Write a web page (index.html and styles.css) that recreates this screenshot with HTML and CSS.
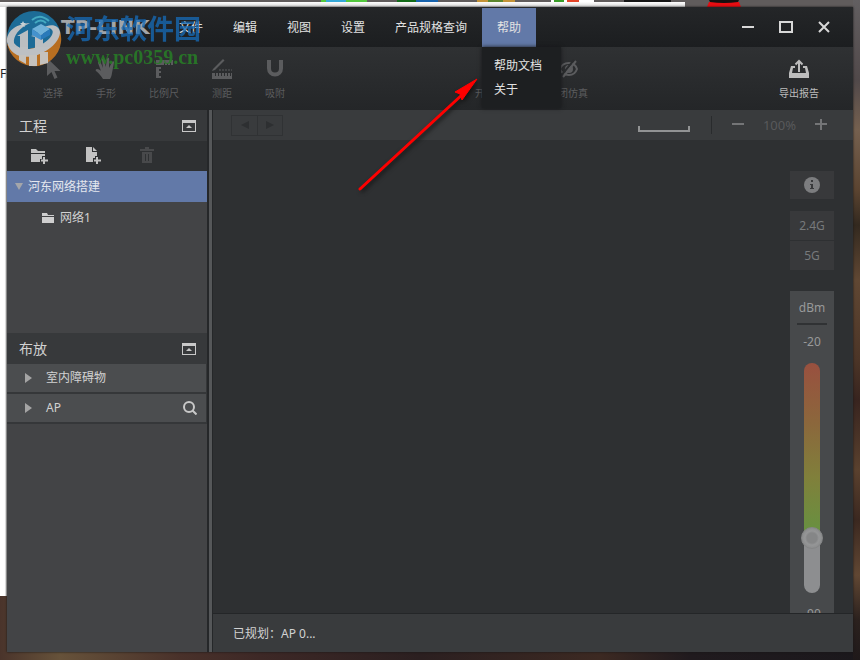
FILE: index.html
```html
<!DOCTYPE html>
<html lang="zh-CN">
<head>
<meta charset="utf-8">
<title>TP-LINK</title>
<link rel="stylesheet" href="styles.css">
</head>
<body>
<svg class="desk-strip" width="860" height="7" viewBox="0 0 860 7" aria-hidden="true">
  <path fill="#53c83e" d="M321 0h46v2h-46z"/><path fill="#36a9d8" d="M326 0h20v2h-20z"/>
  <path fill="#126b18" d="M397 0h20v2h-20z"/><path fill="#1763ad" d="M416 0h22v2h-22z"/>
  <path fill="#c49337" d="M477 0h38v2h-38z"/><path fill="#5b862e" d="M488 0h15v2h-15z"/>
  <path fill="#fff" d="M551 0h43v2h-43z"/><path fill="#399d28" d="M554 0h10v2h-10z"/><path fill="#e44427" d="M567 0h12v2h-12z"/>
  <path fill="#161616" d="M624 0h47v2h-47z"/>
  <path fill="#e80d12" d="M709 2h30l2 5h-34z"/><path fill="#161010" d="M709 0h30l-1 2q-14 2-28 0z"/>
</svg>
<span class="desk-text">Fi</span>
<div class="window">
  <header class="titlebar">
    <span class="brand">TP-LINK</span>
    <nav class="menu">
      <button>文件</button><button>编辑</button><button>视图</button><button>设置</button><button>产品规格查询</button>
      <div class="menu-open">
        <button class="active">帮助</button>
        <div class="dropdown"><button>帮助文档</button><button>关于</button></div>
      </div>
    </nav>
    <div class="controls">
      <button aria-label="最小化"><svg width="16" height="16" viewBox="0 0 16 16"><path d="M2 8h12" stroke="#d8d8d8" stroke-width="2"/></svg></button>
      <button aria-label="最大化"><svg width="16" height="16" viewBox="0 0 16 16"><path d="M2 3h12v10H2z" fill="none" stroke="#d8d8d8" stroke-width="2"/></svg></button>
      <button aria-label="关闭"><svg width="16" height="16" viewBox="0 0 16 16"><path d="M3 3l10 10M13 3L3 13" stroke="#d8d8d8" stroke-width="2"/></svg></button>
    </div>
  </header>

  <div class="toolbar">
    <div class="tools">
      <button><svg width="24" height="24" viewBox="0 0 24 24"><path d="M6 1v18l4.500-4 3 7 3-1.400-3-6.600h6z" fill="currentColor"/></svg>选择</button>
      <button><svg width="24" height="24" viewBox="0 0 24 24"><path d="M9 22c-2-3-4-6-7-8-1-1 0-2 1-2 2 0 3 1 4 2L4 6c0-2 2-2 2.500-1L9 11 8 3c0-2 2-2 2.500 0l1.200 7L13 2c.3-2 2.300-1.600 2.200 0L15 11l3-6c.8-1.600 2.400-.8 2 .8L18 16c-.4 3-1 4-2 6z" fill="currentColor"/></svg>手形</button>
      <button><svg width="24" height="24" viewBox="0 0 24 24"><path d="M4 3h17v5h-2V6h-1v2h-2V6h-1v2h-2V6h-1v2H4z" fill="currentColor"/><path d="M5 10h4v2H7v2h2v2H7v3h2v2H4V10z" fill="currentColor"/></svg>比例尺</button>
      <button><svg width="24" height="24" viewBox="0 0 24 24"><path d="M3 12L13 2l1.500 1.500L5 13l-3 1z" fill="currentColor"/><path d="M2 16v6h20v-6h-1v3h-1v-3h-2v3h-1v-3h-2v3h-1v-3h-2v3h-1v-3H9v3H8v-3H6v3H5v-3z" fill="currentColor"/><path d="M9 13h13" stroke="currentColor" stroke-dasharray="2 1"/></svg>测距</button>
      <button><svg width="24" height="24" viewBox="0 0 24 24"><path d="M6 3v8.500a6 6 0 0 0 12 0V3" fill="none" stroke="currentColor" stroke-width="4"/></svg>吸附</button>
    </div>
    <div class="sim-tools">
      <button><svg width="24" height="24" viewBox="0 0 24 24"><path d="M3 12q9-11 18 0-9 11-18 0z" fill="none" stroke="currentColor" stroke-width="2"/></svg>开启仿真</button>
      <button><svg width="24" height="24" viewBox="0 0 24 24"><path d="M4 12Q6 6 13 6q6 0 8 6-2 6-8 6-7 0-9-6z" fill="none" stroke="currentColor" stroke-width="2"/><circle cx="13" cy="12" r="4" fill="currentColor"/><path d="M18 3L5 19" stroke="#2a2c2e" stroke-width="2"/><path d="M20 4L7 20" stroke="currentColor" stroke-width="2"/></svg>关闭仿真</button>
    </div>
    <button class="export"><svg width="24" height="24" viewBox="0 0 24 24"><path d="M8 9H4L2 16v5h20v-5l-2-7h-4v2h2l1 5H5l1-5h2z" fill="currentColor"/><path d="M12 15V5M8.500 7.500L12 4l3.500 3.500" stroke="currentColor" stroke-width="2" fill="none"/></svg>导出报告</button>
  </div>

  <div class="main">
    <aside class="sidebar">
      <section>
        <div class="panel-head"><h2>工程</h2><button aria-label="折叠工程"><svg width="14" height="12" viewBox="0 0 14 12"><path fill="#c8c8c8" fill-rule="evenodd" d="M0 0h14v12H0zM1 3v8h12V3z"/><path fill="#c8c8c8" d="M4 8l3-3 3 3z"/></svg></button></div>
        <div class="file-tools">
          <button aria-label="新建工程"><svg width="18" height="18" viewBox="0 0 18 18"><path fill="#c2c2c2" d="M1 2h5l2 2h7v2H1zM1 7h14v2h-3v3h-2v3H1z"/><path d="M14 10v7M11 13.500h7" stroke="#c2c2c2" stroke-width="2"/></svg></button>
          <button aria-label="新建网络"><svg width="18" height="18" viewBox="0 0 18 18"><path fill="#c2c2c2" d="M2 0h6v5h5v4h-2v2H9v4H2zM9 0l4 4H9z"/><path d="M13 10v7M10 13.500h7" stroke="#c2c2c2" stroke-width="2"/></svg></button>
          <button aria-label="删除"><svg width="18" height="18" viewBox="0 0 18 18"><path fill="#48494b" fill-rule="evenodd" d="M2 2h5V0h4v2h5v2H2zM4 5h10v11H4zM7 7v7h1V7zM10 7v7h1V7z"/></svg></button>
        </div>
        <button class="tree-row selected"><svg width="8" height="7" viewBox="0 0 8 7"><path d="M0 0h8L4 7z" fill="#a4a6aa"/></svg>河东网络搭建</button>
        <button class="tree-row child"><svg width="12" height="12" viewBox="0 0 12 12"><path fill="#cfcfcf" d="M0 1h5l1 2h6v1H0zM0 5h12v6H0z"/></svg>网络1</button>
      </section>
      <section>
        <div class="panel-head layout-head"><h2>布放</h2><button aria-label="折叠布放"><svg width="14" height="12" viewBox="0 0 14 12"><path fill="#c8c8c8" fill-rule="evenodd" d="M0 0h14v12H0zM1 3v8h12V3z"/><path fill="#c8c8c8" d="M4 8l3-3 3 3z"/></svg></button></div>
        <div class="group"><button><svg width="7" height="10" viewBox="0 0 7 10"><path d="M0 0l7 5-7 5z" fill="#a4a4a4"/></svg>室内障碍物</button></div>
        <div class="group"><button><svg width="7" height="10" viewBox="0 0 7 10"><path d="M0 0l7 5-7 5z" fill="#a4a4a4"/></svg>AP</button><button class="search" aria-label="搜索"><svg width="14" height="14" viewBox="0 0 14 14"><circle cx="6" cy="6" r="5" fill="none" stroke="#c8c8c8" stroke-width="2"/><path d="M9.500 9.500l4 4" stroke="#c8c8c8" stroke-width="2"/></svg></button></div>
      </section>
    </aside>
    <div class="splitter"></div>
    <main class="canvas">
      <div class="canvas-bar">
        <div class="history">
          <button aria-label="后退"><svg width="8" height="8" viewBox="0 0 8 8"><path d="M8 0v8L0 4z" fill="#2d2f31"/></svg></button>
          <button aria-label="前进"><svg width="8" height="8" viewBox="0 0 8 8"><path d="M0 0v8l8-4z" fill="#2d2f31"/></svg></button>
        </div>
        <svg class="ruler" width="52" height="6" viewBox="0 0 52 6" aria-hidden="true"><path d="M1 0v5h50V0" fill="none" stroke="#929394" stroke-width="2"/></svg>
        <div class="zoom">
          <button aria-label="缩小"><svg width="12" height="12" viewBox="0 0 12 12"><path d="M0 5h12" stroke="#747577" stroke-width="2"/></svg></button>
          <span>100%</span>
          <button aria-label="放大"><svg width="12" height="12" viewBox="0 0 12 12"><path d="M0 5h12M6 0v11" stroke="#747577" stroke-width="2"/></svg></button>
        </div>
      </div>
      <div class="workspace">
        <div class="side-controls">
          <button class="info" aria-label="信息"><svg width="16" height="16" viewBox="0 0 16 16"><circle cx="8" cy="8" r="8" fill="#7c7d7f"/><path d="M7 3h2v2H7zM6 7h3v4h1v1H6v-1h1V8H6z" fill="#38393b"/></svg></button>
          <div class="bands"><button>2.4G</button><button>5G</button></div>
          <div class="signal">
            <label for="dbm">dBm</label>
            <span>-20</span>
            <input id="dbm" type="range" min="0" max="100" value="79">
            <span>-90</span>
          </div>
        </div>
      </div>
      <footer class="status">已规划：AP 0...</footer>
    </main>
  </div>
</div>

<div class="watermark">
  <svg width="56" height="58" viewBox="0 0 56 58" aria-hidden="true">
    <circle cx="28" cy="29" r="27" fill="#1d74a4"/>
    <path d="M1 35Q26 50 54 22A27 27 0 0 1 2 38z" fill="#c87620"/>
    <path d="M1 33C0 24 8 15 24 14 13 19 7 27 8 34 12 40 22 42 31 38 44 32 50 23 45 20 42 18 38 19 35 20 43 14 53 15 54 23 54 32 43 43 28 47 14 50 4 45 1 33z" fill="#cdd0d3"/>
    <path d="M11 27l11-6v20h-8V27zM25 27l12-4v16l-8 4V28z" fill="#cdd0d3"/>
    <path d="M13 46h7v9l-7-4zM23 46h8v11h-8zM34 43h8v11l-8 2z" fill="#d6d2cd"/>
    <path d="M26 20l9-5 9 5-9 6z" fill="#79c2ee"/><path d="M26 20v6l9 5v-5z" fill="#4a9fe0"/><path d="M44 20v6l-9 5v-5z" fill="#2c84cb"/>
    <path d="M26 11q8-7 17 1M29 14q6-5 11 0" fill="none" stroke="#48b8d2" stroke-width="2"/>
    <path d="M17 12l1 2h2l-2 2 1 2-2-1-2 1 1-2-2-2h2z" fill="#d8e4e9"/>
  </svg>
  <div class="watermark-text"><strong>河东软件园</strong><span>www.pc0359.cn</span></div>
</div>
<svg class="pointer" width="130" height="124" viewBox="0 0 130 124" aria-hidden="true">
  <path d="M5 114L109 18" stroke="#f00" stroke-width="3" stroke-linecap="round"/><path d="M122 4l-15 21-2-6-5-2z" fill="#f00" stroke="#f00"/>
</svg>
</body>
</html>
```
FILE: styles.css
```css
* { box-sizing: border-box; }
body {
  margin: 0;
  height: 100vh;
  padding: 7px 7px 8px;
  overflow: hidden;
  position: relative;
  font: 12px/16px "Noto Sans", "Noto Sans CJK SC", sans-serif;
  color: #d2d2d2;
  background:
    linear-gradient(#fff, #d5d5d5) 0 2px / 685px 5px no-repeat,
    linear-gradient(90deg, #fff 5px, #a9a9a9) 0 2px / 7px 594px no-repeat,
    linear-gradient(#625f61, #51494a 80px, #75604f 130px, #5b4431 190px, #33291f 225px, #604733 280px, #4c3527 360px, #38241f 400px, #5a412e 470px, #3b2820 520px, #614733 575px, #2b211e 620px, #1f191a) right 0 / 7px 100% no-repeat,
    linear-gradient(90deg, #4a342b, #66523a 60px, #49312a 180px, #3d2826 260px, #2b1f20 420px, #3c2922 600px, #201a1e 690px, #1b181c) 0 100% / 100% 64px no-repeat,
    #605c5c;
}
button {
  border: 0;
  padding: 0;
  background: none;
  color: inherit;
  font: inherit;
}
svg { display: block; flex: none; }
.desk-strip { position: absolute; top: 0; left: 0; }
.desk-text { position: absolute; left: 0; top: 66px; width: 7px; overflow: hidden; color: #222; }

.window {
  height: 100%;
  display: flex;
  flex-direction: column;
  position: relative;
  background: #2e3032;
  box-shadow: 0 0 2px #161616;
}
.titlebar {
  flex: none;
  height: 40px;
  display: flex;
  align-items: stretch;
  background: linear-gradient(#242628, #1c1e20);
}
.brand {
  width: 157px;
  padding-left: 54px;
  font: bold 20px/40px "DejaVu Sans", sans-serif;
  color: #a2a5a9;
}
.menu { display: flex; padding-top: 1px; color: #e2e2e2; }
.menu button { padding: 0 15px; white-space: nowrap; }
.menu-open { position: relative; display: flex; }
.menu .active { background: #6279a8; }
.dropdown {
  position: absolute;
  top: 100%;
  left: 0;
  z-index: 2;
  width: 79px;
  padding: 7px 0 6px;
  display: flex;
  flex-direction: column;
  background: #1d1f21;
  box-shadow: 0 0 4px #161719;
}
.dropdown button { height: 24px; padding: 0 12px; text-align: left; }
.controls { margin-left: auto; padding-right: 21px; display: flex; gap: 22px; }

.toolbar {
  flex: none;
  height: 63px;
  padding: 10px 34px 0 36px;
  display: flex;
  align-items: flex-start;
  color: #5b5c5e;
  background: linear-gradient(#2f3133, #242628);
}
.toolbar button {
  display: flex;
  flex-direction: column;
  align-items: center;
  gap: 4px;
  font-size: 10px;
  white-space: nowrap;
}
.tools, .sim-tools { display: flex; gap: 33px; }
.tools svg { margin: 0 -2px; }
.sim-tools { margin-left: 190px; }
.toolbar .export { margin-left: auto; color: #bdbdbd; }

.main { flex: 1; min-height: 0; display: flex; }
.sidebar {
  flex: none;
  width: 200px;
  display: grid;
  grid-template-rows: 7fr 10fr;
  background: #434446;
}
.panel-head {
  height: 31px;
  padding: 0 11px 0 12px;
  display: flex;
  align-items: center;
  justify-content: space-between;
  background: #37393b;
}
.panel-head h2 { margin: 0; font-size: 14px; font-weight: normal; }
.file-tools {
  height: 30px;
  padding-left: 23px;
  display: flex;
  align-items: center;
  gap: 36px;
  background: #2e3032;
}
.tree-row {
  width: 100%;
  height: 31px;
  padding-left: 8px;
  display: flex;
  align-items: center;
  gap: 5px;
}
.tree-row.selected { background: #6279a8; color: #e4e7ee; }
.tree-row.child { padding-left: 35px; gap: 6px; }
.group {
  height: 30px;
  padding: 0 9px 0 18px;
  display: flex;
  align-items: center;
  justify-content: space-between;
  background: #4b4d4f;
  border: solid #353739;
  border-width: 0 1px 2px 0;
}
.group button { display: flex; align-items: center; gap: 14px; }

.splitter {
  flex: none;
  width: 6px;
  background: #555759;
  border: solid #252729;
  border-width: 0 1px 0 2px;
}
.canvas { flex: 1; min-width: 0; display: flex; flex-direction: column; }
.canvas-bar {
  flex: none;
  height: 30px;
  padding: 0 26px 0 18px;
  display: flex;
  align-items: center;
  background: #393b3d;
}
.history { display: flex; border: 1px solid #303234; }
.history button { width: 25px; height: 19px; display: grid; place-items: center; }
.history button + button { border-left: 1px solid #303234; }
.ruler { margin: 8px 21px 0 auto; }
.zoom {
  height: 18px;
  padding-left: 20px;
  display: flex;
  align-items: center;
  gap: 19px;
  border-left: 1px solid #292b2d;
  color: #58595b;
  font-size: 13px;
}
.workspace {
  flex: 1;
  min-height: 0;
  padding: 31px 19px 0 0;
  display: flex;
  justify-content: flex-end;
  align-items: flex-start;
  overflow: hidden;
  background: #2e3032;
}
.side-controls { width: 44px; display: flex; flex-direction: column; color: #77797b; }
.info { height: 28px; margin-bottom: 12px; display: grid; place-items: center; background: #38393b; }
.bands { margin-bottom: 21px; display: grid; gap: 1px; }
.bands button { height: 29px; background: #38393b; }
.signal {
  padding: 0 7px;
  display: flex;
  flex-direction: column;
  align-items: center;
  background: #47494b;
  color: #98999a;
}
.signal label { width: 100%; height: 34px; line-height: 34px; text-align: center; border-bottom: 2px solid #303234; }
.signal span { line-height: 34px; }
#dbm {
  -webkit-appearance: none;
  appearance: none;
  writing-mode: vertical-lr;
  width: 22px;
  height: 230px;
  margin: 4px 0;
  background: none;
}
#dbm::-webkit-slider-runnable-track {
  width: 16px;
  height: 230px;
  border-radius: 8px;
  background: linear-gradient(#99503f, #8c663c 25%, #80803b 50%, #669241 75%, #8d8e90 75%);
}
#dbm::-webkit-slider-thumb {
  -webkit-appearance: none;
  width: 22px;
  height: 22px;
  margin-left: -3px;
  border-radius: 50%;
  border: 1px solid #858687;
  background: radial-gradient(#858687 5px, #959697 7px, #808182);
}
.status {
  flex: none;
  height: 39px;
  padding-left: 20px;
  line-height: 40px;
  background: #393b3d;
  border-top: 1px solid #242628;
}

.watermark { position: absolute; left: 6px; top: 9px; display: flex; gap: 4px; pointer-events: none; opacity: 0.9; }
.watermark-text { display: flex; flex-direction: column; }
.watermark strong { font: bold 27px/38px "Noto Sans CJK SC", sans-serif; color: #176bb8; opacity: 0.85; }
.watermark span { font: bold 20px/20px "Liberation Serif", serif; color: #287b27; }
.pointer { position: absolute; left: 355px; top: 75px; pointer-events: none; filter: drop-shadow(2px 2px 2px #151515); }
```
